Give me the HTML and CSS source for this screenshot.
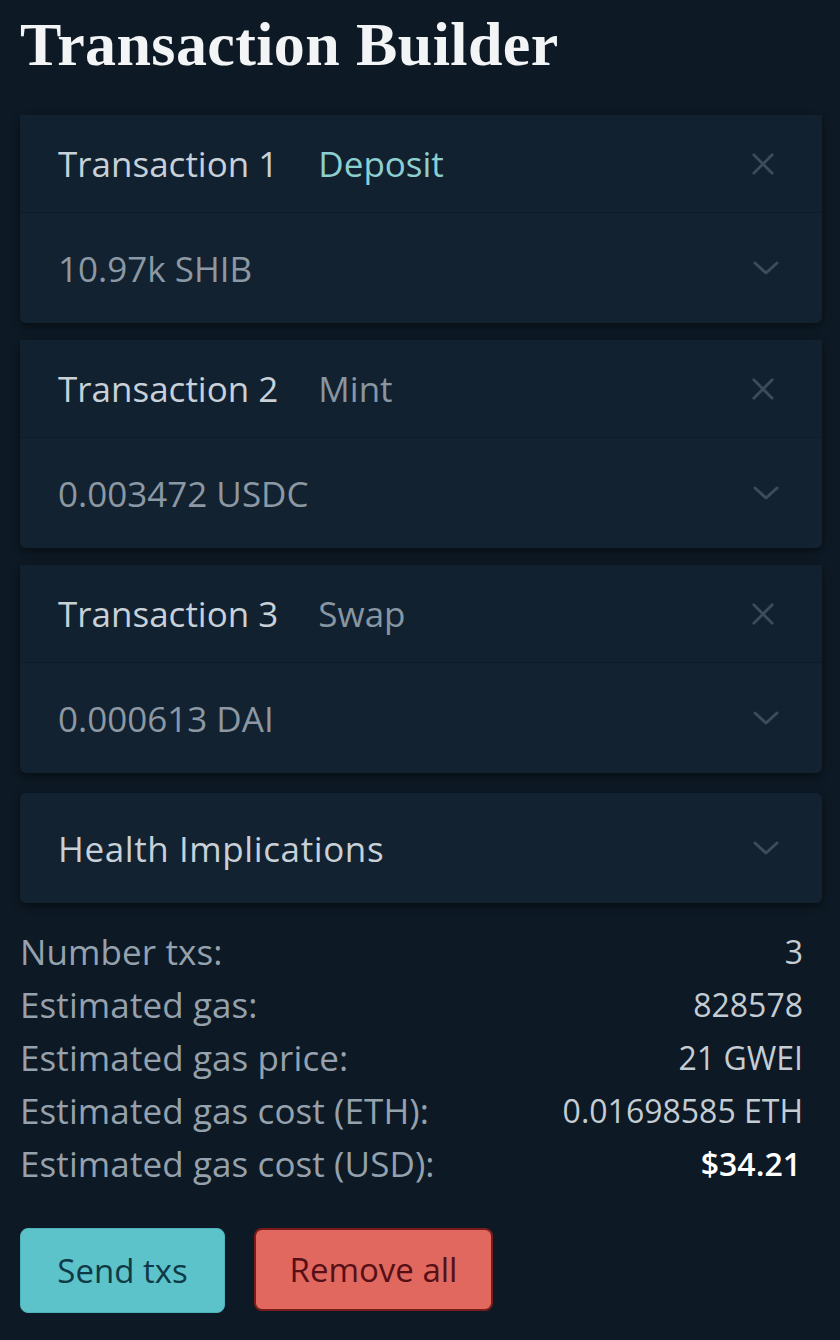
FILE: index.html
```html
<!DOCTYPE html>
<html>
<head>
<meta charset="utf-8">
<link rel="stylesheet" href="styles.css">
</head>
<body>
<main class="page">
  <h1 class="title">Transaction Builder</h1>

  <section class="card">
    <div class="card-head">
      <div class="head-left"><span class="tx-name">Transaction 1</span><span class="tx-type tx-type--accent">Deposit</span></div>
      <svg class="icon-x" viewBox="0 0 26 26"><path d="M3 3 L23 23 M23 3 L3 23"/></svg>
    </div>
    <div class="card-body">
      <span class="amount">10.97k SHIB</span>
      <svg class="icon-chev" viewBox="0 0 26 14"><path d="M2 2 L13 12 L24 2"/></svg>
    </div>
  </section>

  <section class="card">
    <div class="card-head">
      <div class="head-left"><span class="tx-name">Transaction 2</span><span class="tx-type">Mint</span></div>
      <svg class="icon-x" viewBox="0 0 26 26"><path d="M3 3 L23 23 M23 3 L3 23"/></svg>
    </div>
    <div class="card-body">
      <span class="amount">0.003472 USDC</span>
      <svg class="icon-chev" viewBox="0 0 26 14"><path d="M2 2 L13 12 L24 2"/></svg>
    </div>
  </section>

  <section class="card">
    <div class="card-head">
      <div class="head-left"><span class="tx-name">Transaction 3</span><span class="tx-type">Swap</span></div>
      <svg class="icon-x" viewBox="0 0 26 26"><path d="M3 3 L23 23 M23 3 L3 23"/></svg>
    </div>
    <div class="card-body">
      <span class="amount">0.000613 DAI</span>
      <svg class="icon-chev" viewBox="0 0 26 14"><path d="M2 2 L13 12 L24 2"/></svg>
    </div>
  </section>

  <section class="card card--single">
    <span class="tx-name tx-name--wide">Health Implications</span>
    <svg class="icon-chev" viewBox="0 0 26 14"><path d="M2 2 L13 12 L24 2"/></svg>
  </section>

  <dl class="stats">
    <div class="stat"><dt>Number txs:</dt><dd>3</dd></div>
    <div class="stat"><dt>Estimated gas:</dt><dd>828578</dd></div>
    <div class="stat"><dt>Estimated gas price:</dt><dd>21 GWEI</dd></div>
    <div class="stat"><dt>Estimated gas cost (ETH):</dt><dd>0.01698585 ETH</dd></div>
    <div class="stat"><dt>Estimated gas cost (USD):</dt><dd class="strong">$34.21</dd></div>
  </dl>

  <div class="actions">
    <button class="btn btn--send">Send txs</button>
    <button class="btn btn--remove">Remove all</button>
  </div>
</main>
</body>
</html>
```
FILE: styles.css
```css
* { box-sizing: border-box; }
html, body {
  margin: 0;
  background: #0d1924;
}
body {
  font-family: "Open Sans", "Noto Sans", sans-serif;
  color: #c9d1d9;
}
.page {
  padding: 13px 18px 20px 20px;
  display: flex;
  flex-direction: column;
}
.title {
  margin: 0 0 40px 0;
  font-family: "Liberation Serif", "DejaVu Serif", serif;
  font-weight: 700;
  font-size: 62px;
  line-height: 62px;
  color: #f2f4f6;
  letter-spacing: 0.4px;
}
.card {
  background: #132230;
  border-radius: 6px;
  box-shadow: 0 3px 8px rgba(0, 0, 0, 0.45);
  margin-bottom: 17px;
  display: flex;
  flex-direction: column;
}
.card-head, .card-body {
  display: flex;
  align-items: center;
  justify-content: space-between;
  padding: 0 47px 0 38px;
}
.card-head {
  height: 98px;
  border-bottom: 1px solid #0f1c28;
  background: #122130;
}
.card-body {
  height: 110px;
}
.head-left {
  display: flex;
  align-items: baseline;
  gap: 40px;
}
.tx-name {
  font-size: 35px;
  color: #c8d0d8;
}
.tx-name--wide {
  letter-spacing: 0.6px;
}
.tx-type {
  font-size: 35px;
  color: #8896a2;
}
.tx-type--accent {
  color: #8ccfd0;
}
.amount {
  font-size: 35px;
  color: #8c98a3;
}
.icon-x {
  width: 24px;
  height: 24px;
  fill: none;
  stroke: #3d4c5a;
  stroke-width: 3;
  stroke-linecap: round;
}
.icon-chev {
  width: 26px;
  height: 14px;
  fill: none;
  stroke: #3d4c5a;
  stroke-width: 3;
  stroke-linecap: round;
  stroke-linejoin: round;
  margin-right: -4px;
}
.card--single {
  flex-direction: row;
  align-items: center;
  justify-content: space-between;
  height: 110px;
  padding: 0 47px 0 38px;
  margin-top: 3px;
  margin-bottom: 0;
}
.stats {
  margin: 22px 0 0 0;
  padding: 0 19px 0 0;
  display: flex;
  flex-direction: column;
}
.stat {
  display: flex;
  justify-content: space-between;
  align-items: center;
  height: 53px;
}
.stat dt {
  font-size: 35px;
  color: #95a1ad;
  letter-spacing: 0.1px;
}
.stat dd {
  margin: 0;
  font-size: 32px;
  color: #c4ccd4;
}
.stat dd.strong {
  color: #ffffff;
  font-weight: 600;
  margin-right: 2px;
}
.actions {
  display: flex;
  gap: 29px;
  margin-top: 38px;
}
.btn {
  font-family: "Open Sans", "Noto Sans", sans-serif;
  font-size: 33px;
  height: 85px;
  border-radius: 8px;
  padding: 0;
  cursor: pointer;
}
.btn--send {
  background: #5cc3cb;
  color: #0f3a45;
  border: 1px solid #4fb3bb;
  width: 205px;
}
.btn--remove {
  background: #e0685f;
  color: #560f15;
  border: 2px solid #7a1c1c;
  width: 239px;
  height: 83px;
}
```
